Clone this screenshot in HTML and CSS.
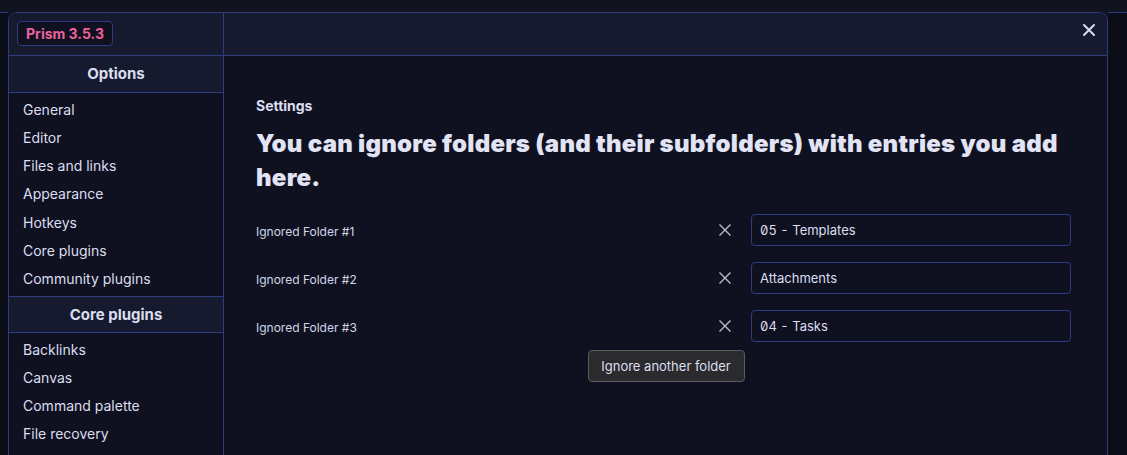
FILE: index.html
```html
<!DOCTYPE html>
<html>
<head>
<meta charset="utf-8">
<link rel="stylesheet" href="styles.css">
</head>
<body>
<div class="topbar"></div>
<div class="stage">
  <div class="gutter gutter-left"></div>
  <div class="modal">
    <aside class="sidebar">
      <div class="brand-bar"><span class="badge">Prism 3.5.3</span></div>
      <div class="group-title">Options</div>
      <ul class="nav">
        <li>General</li>
        <li>Editor</li>
        <li>Files and links</li>
        <li>Appearance</li>
        <li>Hotkeys</li>
        <li>Core plugins</li>
        <li>Community plugins</li>
      </ul>
      <div class="group-title group-title-b">Core plugins</div>
      <ul class="nav nav-b">
        <li>Backlinks</li>
        <li>Canvas</li>
        <li>Command palette</li>
        <li>File recovery</li>
      </ul>
    </aside>
    <main class="main">
      <div class="main-bar">
        <svg class="close" width="14" height="14" viewBox="0 0 14 14"><path d="M2 2L12 12M12 2L2 12" stroke="#d8dbef" stroke-width="2" stroke-linecap="round"/></svg>
      </div>
      <div class="content">
        <div class="section-label">Settings</div>
        <h1 class="heading">You can ignore folders (and their subfolders) with entries you add here.</h1>
        <div class="rows">
          <div class="row">
            <div class="row-label">Ignored Folder #1</div>
            <span class="remove"><svg width="14" height="14" viewBox="0 0 14 14"><path d="M1.5 1.5L12.5 12.5M12.5 1.5L1.5 12.5" stroke="#b9bccd" stroke-width="1.4"/></svg></span>
            <div class="field">05 - Templates</div>
          </div>
          <div class="row">
            <div class="row-label">Ignored Folder #2</div>
            <span class="remove"><svg width="14" height="14" viewBox="0 0 14 14"><path d="M1.5 1.5L12.5 12.5M12.5 1.5L1.5 12.5" stroke="#b9bccd" stroke-width="1.4"/></svg></span>
            <div class="field">Attachments</div>
          </div>
          <div class="row">
            <div class="row-label">Ignored Folder #3</div>
            <span class="remove"><svg width="14" height="14" viewBox="0 0 14 14"><path d="M1.5 1.5L12.5 12.5M12.5 1.5L1.5 12.5" stroke="#b9bccd" stroke-width="1.4"/></svg></span>
            <div class="field">04 - Tasks</div>
          </div>
        </div>
        <div class="actions"><button class="btn">Ignore another folder</button></div>
      </div>
    </main>
  </div>
  <div class="gutter gutter-right"></div>
</div>
</body>
</html>
```
FILE: styles.css
```css
* { box-sizing: border-box; }
html, body { margin: 0; padding: 0; }
body {
  background: #11131f;
  font-family: Inter, "Noto Sans", sans-serif;
  color: #dcdef0;
  width: 1127px;
  height: 455px;
  overflow: hidden;
}
.topbar { height: 12px; background: #11131f; }
.stage { display: flex; height: 443px; }
.gutter { border-top: 1px solid #2f3b7e; background: #0c0e17; }
.gutter-left { width: 8px; }
.gutter-right { flex: 1; }
.modal {
  width: 1100px;
  display: flex;
  border: 1px solid #2f3b7e;
  border-bottom: none;
  border-radius: 9px 9px 0 0;
  background: #0f1120;
  overflow: hidden;
}
.sidebar {
  width: 215px;
  flex: none;
  border-right: 1px solid #2f3b7e;
  background: #0f1120;
}
.brand-bar {
  height: 43px;
  background: #151a2e;
  border-bottom: 1px solid #2f3b7e;
  padding: 8px 0 0 8px;
}
.badge {
  display: inline-block;
  height: 25px;
  line-height: 23px;
  padding: 0 8px;
  border: 1px solid #2f3b7e;
  border-radius: 4px;
  background: #0f1120;
  color: #ec619b;
  font-weight: 700;
  font-size: 14px;
}
.group-title {
  height: 37px;
  line-height: 36px;
  text-align: center;
  font-weight: 700;
  font-size: 15px;
  background: #151a2e;
  border-bottom: 1px solid #2f3b7e;
  color: #dcdef0;
}
.group-title-b {
  height: 37px;
  line-height: 35px;
  border-top: 1px solid #2f3b7e;
}
.nav { list-style: none; margin: 0; padding: 3px 0; }
.nav li {
  height: 28.15px;
  line-height: 28px;
  padding-left: 14px;
  font-size: 14px;
  color: #dcdef0;
}
.main { flex: 1; display: flex; flex-direction: column; }
.main-bar {
  height: 43px;
  flex: none;
  background: #151a2e;
  border-bottom: 1px solid #2f3b7e;
  display: flex;
  justify-content: flex-end;
  align-items: flex-start;
  padding: 10px 11px 0 0;
}
.content { padding: 40px 36px 0 32px; }
.section-label {
  font-size: 14px;
  font-weight: 700;
  line-height: 20px;
  color: #dcdef0;
}
.heading {
  margin: 11px 0 0;
  font-size: 24px;
  font-weight: 900;
  letter-spacing: 0.25px;
  line-height: 34px;
  color: #e2e4f5;
}
.rows { margin-top: 19px; display: flex; flex-direction: column; gap: 16px; }
.row { display: flex; align-items: center; height: 32px; }
.row-label {
  flex: 1;
  font-size: 12px;
  padding-top: 3px;
  color: #d4d6e6;
}
.remove {
  width: 24px;
  height: 24px;
  display: flex;
  align-items: center;
  justify-content: center;
  margin-right: 14px;
}
.field {
  width: 320px;
  height: 32px;
  line-height: 30px;
  border: 1px solid #2f3b7e;
  border-radius: 4px;
  padding-left: 8px;
  font-size: 13px;
  font-feature-settings: "zero" 1, "tnum" 1;
  color: #dcdef0;
  background: #0f1120;
}
.actions { display: flex; justify-content: center; margin-top: 8px; padding-left: 5px; }
.btn {
  height: 32px;
  width: 157px;
  background: #2b2b2d;
  border: 1px solid #5a5b60;
  border-radius: 4px;
  color: #dcdef0;
  font-family: Inter, "Noto Sans", sans-serif;
  font-size: 13px;
  padding: 0;
}
```
